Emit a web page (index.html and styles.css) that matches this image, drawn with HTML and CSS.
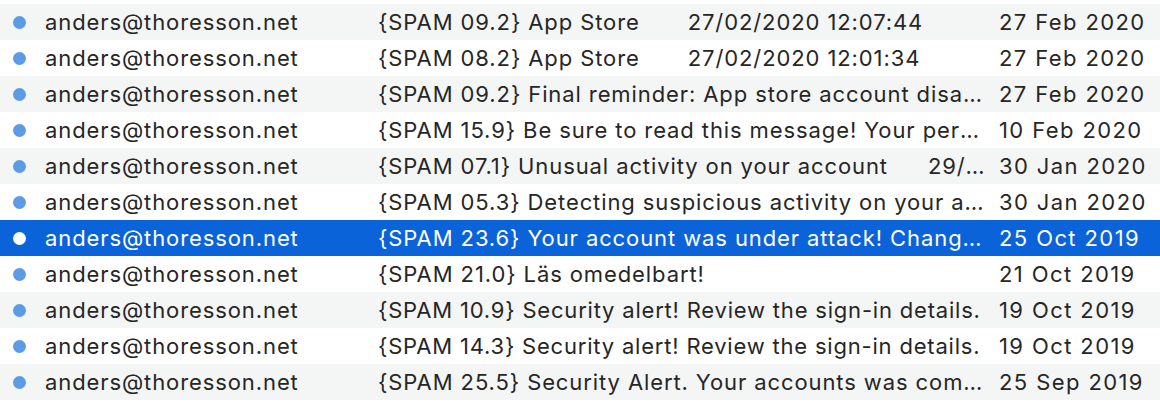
FILE: index.html
```html
<!DOCTYPE html>
<html>
<head>
<meta charset="utf-8">
<link rel="stylesheet" href="styles.css">
</head>
<body>
<div class="list">
  <div class="row white"><span class="dot"></span><span class="from">anders@thoresson.net</span><span class="subject">{SPAM 12.4} Logga in igen</span><span class="date">27 Feb 2020</span></div>
  <div class="row gray"><span class="dot"></span><span class="from">anders@thoresson.net</span><span class="subject">{SPAM 09.2} App Store<span class="tab1">27/02/2020 12:07:44</span></span><span class="date">27 Feb 2020</span></div>
  <div class="row white"><span class="dot"></span><span class="from">anders@thoresson.net</span><span class="subject">{SPAM 08.2} App Store<span class="tab1">27/02/2020 12:01:34</span></span><span class="date">27 Feb 2020</span></div>
  <div class="row gray"><span class="dot"></span><span class="from">anders@thoresson.net</span><span class="subject">{SPAM 09.2} Final reminder: App store account disabled</span><span class="date">27 Feb 2020</span></div>
  <div class="row white"><span class="dot"></span><span class="from">anders@thoresson.net</span><span class="subject">{SPAM 15.9} Be sure to read this message! Your personal data</span><span class="date">10 Feb 2020</span></div>
  <div class="row gray"><span class="dot"></span><span class="from">anders@thoresson.net</span><span class="subject">{SPAM 07.1} Unusual activity on your account<span class="tab2">29/01/2020 18:22:10</span></span><span class="date">30 Jan 2020</span></div>
  <div class="row white"><span class="dot"></span><span class="from">anders@thoresson.net</span><span class="subject">{SPAM 05.3} Detecting suspicious activity on your account</span><span class="date">30 Jan 2020</span></div>
  <div class="row selected"><span class="dot"></span><span class="from">anders@thoresson.net</span><span class="subject">{SPAM 23.6} Your account was under attack! Change your password</span><span class="date">25 Oct 2019</span></div>
  <div class="row white"><span class="dot"></span><span class="from">anders@thoresson.net</span><span class="subject">{SPAM 21.0} Läs omedelbart!</span><span class="date">21 Oct 2019</span></div>
  <div class="row gray"><span class="dot"></span><span class="from">anders@thoresson.net</span><span class="subject fit">{SPAM 10.9} Security alert! Review the sign-in details.</span><span class="date">19 Oct 2019</span></div>
  <div class="row white"><span class="dot"></span><span class="from">anders@thoresson.net</span><span class="subject fit">{SPAM 14.3} Security alert! Review the sign-in details.</span><span class="date">19 Oct 2019</span></div>
  <div class="row gray"><span class="dot"></span><span class="from">anders@thoresson.net</span><span class="subject">{SPAM 25.5} Security Alert. Your accounts was compromised</span><span class="date">25 Sep 2019</span></div>
  <div class="row white"><span class="dot"></span><span class="from">anders@thoresson.net</span><span class="subject">{SPAM 11.1} Important notice</span><span class="date">20 Sep 2019</span></div>
</div>
</body>
</html>
```
FILE: styles.css
```css
html, body {
  margin: 0;
  padding: 0;
  background: #ffffff;
  overflow: hidden;
  height: 406px;
}
.list {
  margin-top: -32px;
  font-family: Inter, "Liberation Sans", sans-serif;
  font-size: 22px;
  letter-spacing: 0.9px;
  color: #262626;
}
.row {
  display: flex;
  align-items: center;
  height: 36px;
  white-space: nowrap;
}
.gray { background: #f4f5f5; }
.white { background: #ffffff; }
.selected { background: #0a63d8; color: #ffffff; }
.dot {
  width: 13px;
  height: 13px;
  border-radius: 50%;
  background: #5c9ce6;
  margin-left: 13px;
  flex: none;
}
.selected .dot { background: #ffffff; }
.from {
  margin-left: 19px;
  width: 333px;
  flex: none;
}
.subject {
  width: 607px;
  flex: none;
  overflow: hidden;
  text-overflow: ellipsis;
}
.subject.fit { letter-spacing: 0.8px; }
.tab1 { margin-left: 48px; }
.tab2 { margin-left: 40px; }
.date {
  margin-left: 14px;
  letter-spacing: 1.4px;
  flex: none;
}
```
